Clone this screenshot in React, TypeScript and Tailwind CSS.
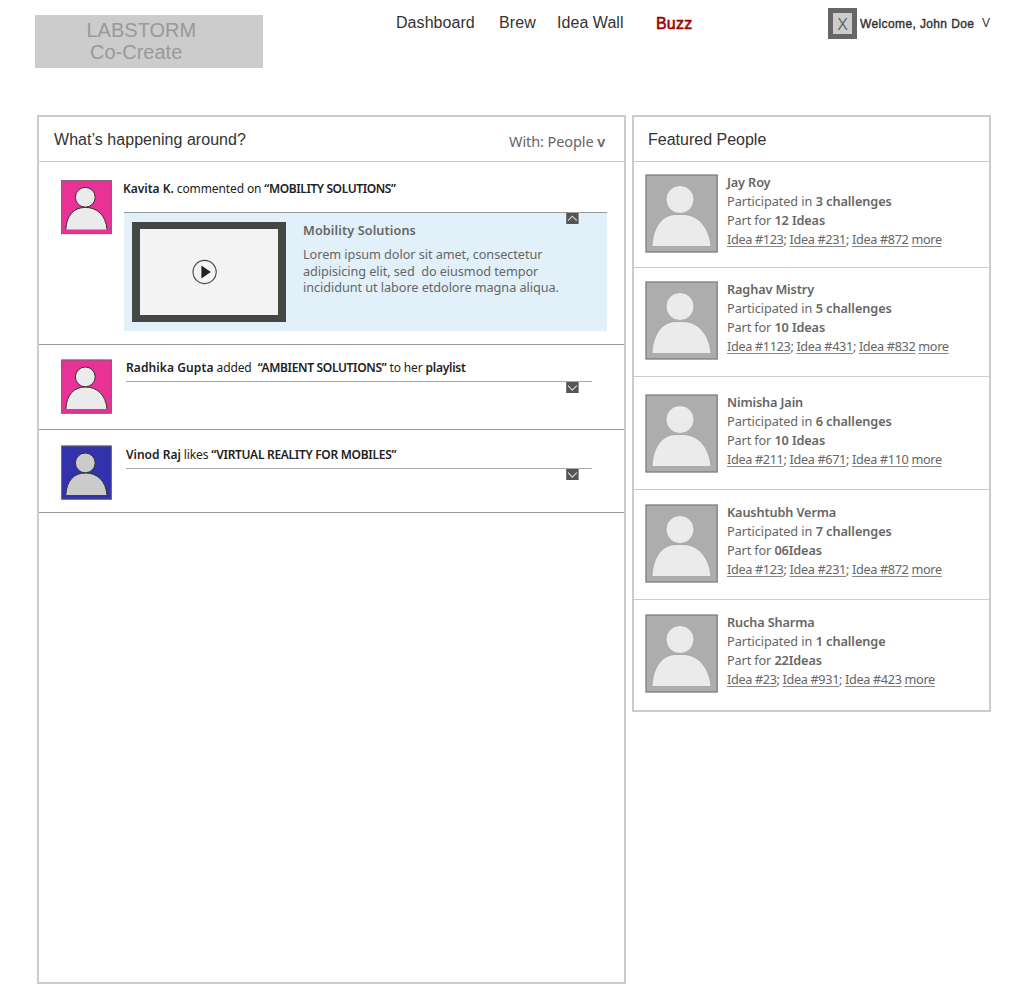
import type { ReactNode } from "react";

const stories = [
  {
    who: "Kavita K.",
    whoClass: "tracking-[0px]",
    verb: " commented on ",
    title: "“MOBILITY SOLUTIONS”",
    titleClass: "tracking-[-0.4px]",
    tail: "",
    tailBold: "",
    box: "h-[183px] pt-[18px]",
    text: "pl-[11px]",
    skin: "#e83296",
    body: "#ebebeb",
    offset: 0,
    open: true,
  },
  {
    who: "Radhika Gupta",
    whoClass: "tracking-[0.1px]",
    verb: " added  ",
    title: "“AMBIENT SOLUTIONS”",
    titleClass: "tracking-[-0.33px]",
    tail: " to her ",
    tailBold: "playlist",
    box: "h-[85px] pt-[14px]",
    text: "pl-[14px]",
    skin: "#e83296",
    body: "#ebebeb",
    offset: 0.6,
    open: false,
  },
  {
    who: "Vinod Raj",
    whoClass: "tracking-[0px]",
    verb: " likes ",
    title: "“VIRTUAL REALITY FOR MOBILES”",
    titleClass: "tracking-[-0.3px]",
    tail: "",
    tailBold: "",
    box: "h-[83px] pt-[15px]",
    text: "pl-[14px] pt-[1px]",
    skin: "#3232ac",
    body: "#cbcbcb",
    offset: 0.6,
    open: false,
  },
];

const people = [
  { name: "Jay Roy", challenges: "3 challenges", ideas: "12 Ideas", links: ["Idea #123", "Idea #231", "Idea #872"], box: "h-[106px] pt-[12px] border-b" },
  { name: "Raghav Mistry", challenges: "5 challenges", ideas: "10 Ideas", links: ["Idea #1123", "Idea #431", "Idea #832"], box: "h-[109px] pt-[13px] border-b" },
  { name: "Nimisha Jain", challenges: "6 challenges", ideas: "10 Ideas", links: ["Idea #211", "Idea #671", "Idea #110"], box: "h-[113px] pt-[17px] border-b" },
  { name: "Kaushtubh Verma", challenges: "7 challenges", ideas: "06Ideas", links: ["Idea #123", "Idea #231", "Idea #872"], box: "h-[110px] pt-[14px] border-b" },
  { name: "Rucha Sharma", challenges: "1 challenge", ideas: "22Ideas", links: ["Idea #23", "Idea #931", "Idea #423"], box: "h-[110px] pt-[14px]" },
];

function SmallAvatar({ skin, body, offset }: { skin: string; body: string; offset: number }) {
  return (
    <svg width="51" height="55" viewBox="0 0 51 55" className="block shrink-0">
      <g transform={`translate(0 ${offset})`}>
        <rect x="0.6" y="0.3" width="49.8" height="53.4" fill={skin} stroke="#666" />
        <path d="M4.8 49.5C5.5 35 13 27.4 24.5 27.4S44.8 35 46 49.5Z" fill={body} />
        <path d="M4.8 49.5C5.5 35 13 27.4 24.5 27.4S44.8 35 46 49.5" fill="none" stroke="#333" />
        <circle cx="24.3" cy="17.3" r="9.9" fill={body} stroke="#333" />
      </g>
    </svg>
  );
}

function LargeAvatar() {
  return (
    <svg width="73" height="79" viewBox="0 0 73 79" className="block shrink-0">
      <rect x="1" y="1" width="71.2" height="77" fill="#adadad" stroke="#7d7d7d" strokeWidth="1.3" />
      <path d="M7 72C8 52 18 40.5 31 40.5H38C52 40.5 64 52 66 72Z" fill="#ebebeb" />
      <path d="M7 72C8 52 18 40.5 31 40.5H38C52 40.5 64 52 66 72" fill="none" stroke="#a0a0a0" strokeWidth="0.8" />
      <circle cx="35" cy="25.5" r="14" fill="#ebebeb" stroke="#a0a0a0" strokeWidth="0.8" />
    </svg>
  );
}

function Toggle({ open }: { open: boolean }) {
  return (
    <svg width="13" height="12" viewBox="0 0 13 12" className="block">
      <rect x="0.2" width="12.4" height="11" fill="#555" />
      <path d={open ? "M2 7.6L6.3 3.2L10.8 7.6" : "M2 3.6L6.3 8.2L10.8 3.6"} fill="none" stroke="#ddd" strokeWidth="1.1" />
    </svg>
  );
}

function PanelHeader({ title, children }: { title: ReactNode; children?: ReactNode }) {
  return (
    <div className="flex h-[45px] items-center justify-between border-b border-[#ccc] pl-[14px] pr-[19px]">
      <h2 className="pt-[2px] font-['Liberation_Sans',sans-serif] text-[16px] leading-[18px] text-[#333]">{title}</h2>
      {children}
    </div>
  );
}

function Preview() {
  return (
    <div className="flex h-[118px] w-[483px] bg-[#e2f1f9] pl-[8px] pt-[9px]">
      <div className="flex h-[100px] w-[154px] shrink-0 items-center justify-center border-[7px] border-x-[8px] border-[#444845] bg-[#f3f3f3]">
        <svg width="26" height="26" viewBox="0 0 26 26" className="-translate-x-[4px]">
          <circle cx="12.6" cy="13" r="11.6" fill="none" stroke="#444" strokeWidth="1.1" />
          <path d="M9.4 6.5V19.5L18.8 13Z" fill="#222" />
        </svg>
      </div>
      <div className="pl-[17px] text-[#666]">
        <h3 className="-mt-px whitespace-nowrap text-[12.7px] font-semibold leading-[18px] tracking-[0.1px]">Mobility Solutions</h3>
        <p className="whitespace-pre pt-[7px] text-[12.7px] leading-[16.5px] tracking-[-0.06px]">
          {"Lorem ipsum dolor sit amet, consectetur\nadipisicing elit, sed  do eiusmod tempor\nincididunt ut labore etdolore magna aliqua."}
        </p>
      </div>
    </div>
  );
}

function IdeaLink({ children }: { children: ReactNode }) {
  return (
    <a className="underline decoration-[#888] decoration-1 underline-offset-[2px] [text-decoration-skip-ink:none]">{children}</a>
  );
}

export default function App() {
  return (
    <div className="h-[1000px] w-[1024px] overflow-hidden bg-white font-['Noto_Sans',sans-serif]">
      <header className="flex h-[115px] items-start font-['Liberation_Sans',sans-serif] text-[16px] leading-[18px] text-[#333]">
        <div className="ml-[35px] mt-[15px] h-[53px] w-[228px] whitespace-nowrap bg-[#ccc] pt-[4px] text-[20px] leading-[22px] text-[#999]">
          <div className="pl-[51.5px]">LABSTORM</div>
          <div className="pl-[55px]">Co-Create</div>
        </div>
        <nav className="ml-[133px] mt-[14px] flex w-[432px] whitespace-nowrap">
          <a className="w-[103px] tracking-[0.06px]">Dashboard</a>
          <a className="w-[58px] tracking-[0.1px]">Brew</a>
          <a className="w-[99px] tracking-[0.05px]">Idea Wall</a>
          <a className="pt-[1px] tracking-[0.2px] text-[#a00000] [-webkit-text-stroke:0.6px_#a00000]">Buzz</a>
        </nav>
        <div className="mt-[8px] flex items-center whitespace-nowrap">
          <span className="flex h-[31px] w-[29px] items-center justify-center border-[5px] border-[#666] bg-[#ccc] pt-[2px] text-[16px] text-[#666]">X</span>
          <span className="w-[125px] pl-[3px] text-[12px] tracking-[0.38px] [-webkit-text-stroke:0.4px_#333]">Welcome, John Doe</span>
          <span className="pb-[1px] text-[12px]">V</span>
        </div>
      </header>

      <main className="flex items-start gap-[6px] pl-[37px]">
        <section className="h-[869px] w-[589px] border-2 border-[#ccc]">
          <PanelHeader title={<span className="ml-px tracking-[0.04px]">What’s happening around?</span>}>
            <span className="pt-[4px] text-[14.5px] leading-[18px] tracking-[-0.1px] text-[#666]">
              With: People <b className="font-semibold">v</b>
            </span>
          </PanelHeader>
          {stories.map((s) => (
            <article key={s.title} className={`flex items-start border-b border-[#999] pl-[22px] ${s.box}`}>
              <SmallAvatar skin={s.skin} body={s.body} offset={s.offset} />
              <div className={s.text}>
                <p className="whitespace-pre text-[12px] leading-[18px] tracking-[-0.12px] text-[#222]">
                  <b className={`font-semibold ${s.whoClass}`}>{s.who}</b>
                  {s.verb}
                  <b className={`font-semibold ${s.titleClass}`}>{s.title}</b>
                  {s.tail}
                  <b className="font-semibold tracking-[-0.25px]">{s.tailBold}</b>
                </p>
                <div className={s.open ? "relative ml-px mt-[14px] w-[483px] border-t border-[#999]" : "relative mt-[4px] w-[466px] border-t border-[#aaa]"}>
                  {s.open && <Preview />}
                  <div className={s.open ? "absolute right-[28px] top-0" : "absolute right-[13px] top-0"}>
                    <Toggle open={s.open} />
                  </div>
                </div>
              </div>
            </article>
          ))}
        </section>

        <section className="h-[597px] w-[359px] border-2 border-[#ccc]">
          <PanelHeader title="Featured People" />
          {people.map((p) => (
            <article key={p.name} className={`flex items-start border-[#ccc] pl-[11px] ${p.box}`}>
              <LargeAvatar />
              <div className="-mt-px whitespace-nowrap pl-[9px] text-[12.7px] leading-[19px] tracking-[-0.05px] text-[#666]">
                <h3 className="font-semibold tracking-[-0.12px]">{p.name}</h3>
                <p>Participated in <b className="font-semibold">{p.challenges}</b></p>
                <p className="tracking-[-0.12px]">Part for <b className="font-semibold">{p.ideas}</b></p>
                <p className="tracking-[-0.35px]">
                  {p.links.map((l, i) => (
                    <span key={l}>
                      <IdeaLink>{l}</IdeaLink>
                      {i < 2 ? "; " : " "}
                    </span>
                  ))}
                  <IdeaLink>more</IdeaLink>
                </p>
              </div>
            </article>
          ))}
        </section>
      </main>
    </div>
  );
}
